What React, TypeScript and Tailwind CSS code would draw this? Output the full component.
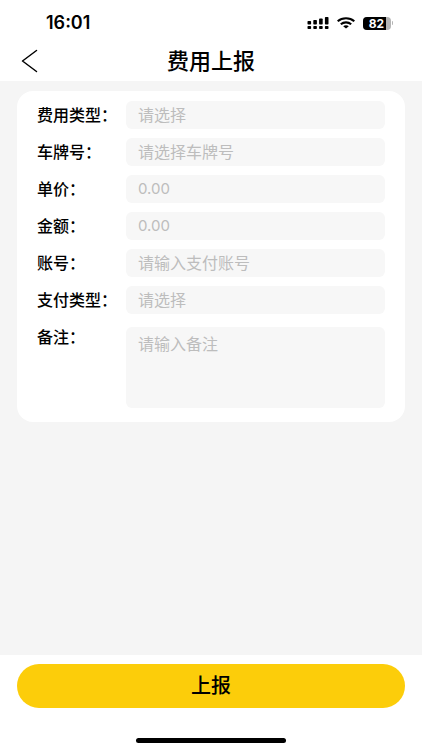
import React, { useState } from 'react';

interface Field {
  id: string;
  label: string;
  placeholder: string;
  kind: 'select' | 'text' | 'number';
}

const fields: Field[] = [
  { id: 'costType', label: '费用类型：', placeholder: '请选择', kind: 'select' },
  { id: 'plate', label: '车牌号：', placeholder: '请选择车牌号', kind: 'select' },
  { id: 'price', label: '单价：', placeholder: '0.00', kind: 'number' },
  { id: 'amount', label: '金额：', placeholder: '0.00', kind: 'number' },
  { id: 'account', label: '账号：', placeholder: '请输入支付账号', kind: 'text' },
  { id: 'payType', label: '支付类型：', placeholder: '请选择', kind: 'select' }
];

const controlClass =
  'min-w-0 flex-1 appearance-none rounded-md bg-[#f7f7f7] px-3 outline-none placeholder:text-[#bdbdbd]';

function StatusBar() {
  return (
    <div className="flex h-[41px] items-center justify-between pt-[5px] pr-[29px] pl-[46px]">
      <span className="text-lg leading-5 font-semibold">16:01</span>
      <div className="flex items-center gap-2">
        <svg className="h-3 w-[22px]" viewBox="0 0 22 12" aria-hidden="true">
          <rect x="0.5" y="4" width="3.6" height="3.6" rx="0.8" />
          <rect x="6.3" y="3" width="3.6" height="4.6" rx="0.8" />
          <rect x="12.1" y="1.5" width="3.6" height="6.1" rx="0.8" />
          <rect x="17.9" y="0" width="3.6" height="7.6" rx="0.8" />
          <rect x="0.5" y="9" width="3.6" height="3" rx="0.8" />
          <rect x="6.3" y="9" width="3.6" height="3" rx="0.8" />
          <rect x="12.1" y="9" width="3.6" height="3" rx="0.8" />
          <rect x="17.9" y="9" width="3.6" height="3" rx="0.8" />
        </svg>
        <svg className="h-3 w-[18px]" viewBox="0 0 18 12" fill="none" stroke="#000" strokeWidth="2.1" aria-hidden="true">
          <path d="M0.7 4.3C5.3 0.3 12.7 0.3 17.3 4.3" />
          <path d="M3.8 7.2C6.8 4.7 11.2 4.7 14.2 7.2" />
          <path d="M9 11.6L6.2 9.3C7.8 8 10.2 8 11.8 9.3Z" fill="#000" stroke="none" />
        </svg>
        <div className="flex items-center gap-px">
          <div className="flex h-[13px] w-7 rounded bg-[#b5b5b5]">
            <span className="w-[23px] rounded-l bg-black pl-1 text-center text-xs leading-[13px] font-bold text-white">
              82
            </span>
          </div>
          <span className="h-1 w-px rounded-r bg-[#b5b5b5]" />
        </div>
      </div>
    </div>
  );
}

export default function App() {
  const [values, setValues] = useState<Record<string, string>>({});

  const update = (id: string, value: string) => setValues({ ...values, [id]: value });

  const handleSubmit = (e: React.FormEvent) => {
    e.preventDefault();
  };

  return (
    <div
      lang="zh-CN"
      className="flex min-h-screen flex-col bg-white font-['Inter','Noto_Sans_CJK_SC',sans-serif] text-black"
    >
      <StatusBar />
      <header className="grid h-10 grid-cols-[48px_1fr_48px] items-center">
        <button type="button" aria-label="返回" className="flex justify-end pr-[10px]">
          <svg className="h-6 w-[18px]" viewBox="0 0 18 24" fill="none" stroke="#000" strokeWidth="1.5" aria-hidden="true">
            <path d="M16.5 1.5L2.5 12L16.5 22.5" strokeLinecap="round" strokeLinejoin="round" />
          </svg>
        </button>
        <h1 className="text-center text-[22px] leading-7 font-medium">费用上报</h1>
      </header>

      <form onSubmit={handleSubmit} className="flex flex-1 flex-col">
        <main className="flex-1 bg-[#f5f5f5] px-[17px] pt-[10px]">
          <div className="rounded-2xl bg-white pt-[10px] pr-5 pb-[14px] pl-5">
            <div className="flex flex-col gap-[9px]">
              {fields.map((field) => (
                <div key={field.id} className="flex h-7">
                  <label htmlFor={field.id} className="w-[89px] shrink-0 text-base leading-7 font-medium whitespace-nowrap">
                    {field.label}
                  </label>
                  {field.kind === 'select' ? (
                    <select
                      id={field.id}
                      value={values[field.id] || ''}
                      onChange={(e) => update(field.id, e.target.value)}
                      className={`${controlClass} text-base text-[#bdbdbd]`}
                    >
                      <option value="">{field.placeholder}</option>
                    </select>
                  ) : (
                    <input
                      id={field.id}
                      type="text"
                      inputMode={field.kind === 'number' ? 'decimal' : 'text'}
                      value={values[field.id] || ''}
                      onChange={(e) => update(field.id, e.target.value)}
                      placeholder={field.placeholder}
                      className={`${controlClass} ${field.kind === 'number' ? 'text-[15px]' : 'text-base'}`}
                    />
                  )}
                </div>
              ))}
            </div>
            <div className="mt-[13px] flex">
              <label htmlFor="remark" className="w-[89px] shrink-0 text-base leading-5 font-medium">
                备注：
              </label>
              <textarea
                id="remark"
                value={values.remark || ''}
                onChange={(e) => update('remark', e.target.value)}
                placeholder="请输入备注"
                className={`${controlClass} h-[81px] resize-none py-[7px] text-base leading-5`}
              />
            </div>
          </div>
        </main>

        <footer className="flex flex-col items-center px-[17px] pt-[9px] pb-[7px]">
          <button type="submit" className="h-11 w-full rounded-full bg-[#fccd0a] text-xl font-medium">
            上报
          </button>
          <div className="mt-[30px] h-[5px] w-[150px] rounded-full bg-black" />
        </footer>
      </form>
    </div>
  );
}
